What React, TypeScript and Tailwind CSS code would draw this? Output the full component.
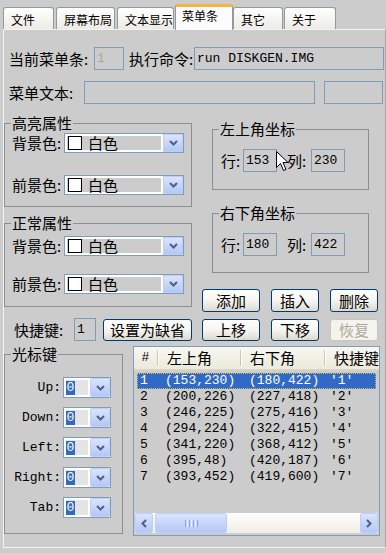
import React from "react";

const MONO = "font-['Liberation_Mono','Noto_Sans_CJK_SC',monospace] text-[13px]";

function Tab({ label, cls }: { label: string; cls: string }) {
  return (
    <div
      className={
        "flex h-[22px] items-center rounded-t-[3px] border border-b-0 border-[#919b9c] bg-gradient-to-b from-white to-[#ecebe5] pl-[7px] pt-[2px] text-[12px] leading-[14px] " +
        cls
      }
    >
      {label}
    </div>
  );
}

function ActiveTab() {
  return (
    <div className="relative z-10 -mb-px ml-[1px] flex h-[26px] w-[58px] items-start rounded-t-[3px] border border-b-0 border-t-[3px] border-[#919b9c] border-t-[#f5b53a] bg-[#fcfcfe] pl-[6px] pt-[2px] text-[12px] leading-[14px]">
      菜单条
    </div>
  );
}

function Field({ cls, value }: { cls: string; value?: string }) {
  return (
    <div className={"flex h-[23px] items-center overflow-hidden border border-[#7f9db9] pl-[2px] " + MONO + " " + cls}>
      {value}
    </div>
  );
}

function Chevron({ dir }: { dir: "down" | "left" | "right" }) {
  if (dir === "down")
    return (
      <svg width="9" height="6" viewBox="0 0 9 6">
        <path d="M1 1 L4.5 4.5 L8 1" fill="none" stroke="#4d6185" strokeWidth="2" />
      </svg>
    );
  if (dir === "left")
    return (
      <svg width="6" height="9" viewBox="0 0 6 9">
        <path d="M5 1 L1.5 4.5 L5 8" fill="none" stroke="#4d6185" strokeWidth="2" />
      </svg>
    );
  return (
    <svg width="6" height="9" viewBox="0 0 6 9">
      <path d="M1 1 L4.5 4.5 L1 8" fill="none" stroke="#4d6185" strokeWidth="2" />
    </svg>
  );
}

function DropBtn() {
  return (
    <div className="flex h-full w-[20px] items-center justify-center rounded-[2px] border border-[#bcd0f8] bg-gradient-to-b from-[#dae4fd] to-[#b4c7f5]">
      <Chevron dir="down" />
    </div>
  );
}

function Group({ legend, cls, children }: { legend: string; cls: string; children: React.ReactNode }) {
  return (
    <fieldset className={"border border-[#8f8f8f] " + cls}>
      <legend className="ml-[6px] px-[1px] text-[15px] leading-[14px]">{legend}</legend>
      {children}
    </fieldset>
  );
}

function ColorRow({ label, cls }: { label: string; cls: string }) {
  return (
    <div className={"flex h-[20px] items-center " + cls}>
      <span className="w-[59px] pl-[7px]">{label}</span>
      <div className="flex h-[20px] w-[120px] border border-[#7f9db9]">
        <div className="flex flex-1 items-center border-2 border-white pl-[1px]">
          <span className="h-[14px] w-[14px] border border-black bg-white" />
          <span className="ml-[6px] leading-[14px]">白色</span>
        </div>
        <DropBtn />
      </div>
    </div>
  );
}

function CoordRow({ a, b, cls }: { a: string; b: string; cls: string }) {
  return (
    <div className={"flex h-[23px] items-center " + cls}>
      <span className="w-[30px] pl-[8px]">行:</span>
      <Field cls="w-[34px]" value={a} />
      <span className="ml-[10px] w-[24px]">列:</span>
      <Field cls="w-[34px]" value={b} />
    </div>
  );
}

function Btn({ children, cls, disabled }: { children: React.ReactNode; cls: string; disabled?: boolean }) {
  return (
    <div
      className={
        (disabled
          ? "border-[#c9c7ba] bg-[#f4f3ee] text-[#aca899] "
          : "border-[#003c74] bg-gradient-to-b from-white via-[#f6f5f1] to-[#dcd9ce] ") +
        "flex items-center justify-center rounded-[3px] border leading-none " +
        cls
      }
    >
      {children}
    </div>
  );
}

function KeyRow({ label }: { label: string }) {
  return (
    <div className="flex h-[21px] items-center">
      <span className={"w-[58px] pr-[2px] text-right " + MONO}>{label}</span>
      <div className="flex h-[21px] w-[48px] border border-[#7f9db9] bg-white">
        <div className="flex flex-1 items-center border-2 border-white bg-[#e4e4e4]">
          <span className={"flex h-[14px] w-[9px] items-center justify-center bg-[#316ac5] text-white " + MONO}>0</span>
        </div>
        <DropBtn />
      </div>
    </div>
  );
}

const rows = [
  ["1", "(153,230)", "(180,422)", "'1'"],
  ["2", "(200,226)", "(227,418)", "'2'"],
  ["3", "(246,225)", "(275,416)", "'3'"],
  ["4", "(294,224)", "(322,415)", "'4'"],
  ["5", "(341,220)", "(368,412)", "'5'"],
  ["6", "(395,48)", "(420,187)", "'6'"],
  ["7", "(393,452)", "(419,600)", "'7'"],
];

function Divider() {
  return (
    <div className="flex h-[16px] w-[2px]">
      <div className="h-full w-px bg-[#c9c6b4]" />
      <div className="h-full w-px bg-white" />
    </div>
  );
}

function ListView() {
  return (
    <div className="ml-[10px] flex h-[190px] w-[247px] flex-col overflow-hidden border border-[#7f9db9] bg-[#cccccc]">
      <div className="flex h-[24px] shrink-0 items-center border-b-2 border-[#d8d4c4] bg-gradient-to-b from-[#f8f7f2] to-[#ebeadb] whitespace-nowrap">
        <div className={"w-[23px] text-center " + MONO}>#</div>
        <Divider />
        <div className="w-[81px] pl-[8px]">左上角</div>
        <Divider />
        <div className="w-[82px] pl-[8px]">右下角</div>
        <Divider />
        <div className="pl-[8px]">快捷键</div>
      </div>
      <div className={"flex-1 px-[3px] pt-[2px] leading-[16px] " + MONO}>
        {rows.map((r, i) => (
          <div
            key={r[0]}
            className={
              "flex h-[16px] items-center whitespace-nowrap " +
              (i === 0 ? "bg-[#316ac5] text-white outline-1 outline-dotted -outline-offset-1 outline-[#c9b86a]" : "")
            }
          >
            <div className="w-[20px] pl-[3px]">{r[0]}</div>
            <div className="w-[83px] pl-[8px]">{r[1]}</div>
            <div className="w-[84px] pl-[9px]">{r[2]}</div>
            <div className="pl-[6px]">{r[3]}</div>
          </div>
        ))}
      </div>
      <div className="mx-px mb-[2px] flex h-[20px] shrink-0 items-stretch bg-gradient-to-b from-[#fefefe] to-[#f0eee5]">
        <div className="flex w-[18px] items-center justify-center rounded-[2px] border border-[#bcd0f8] bg-gradient-to-b from-[#dae4fd] to-[#b4c7f5]">
          <Chevron dir="left" />
        </div>
        <div className="ml-[2px] flex w-[72px] items-center justify-center gap-[1px] rounded-[2px] border border-[#bcd0f8] bg-gradient-to-b from-[#dae4fd] to-[#b4c7f5]">
          <div className="h-[7px] w-px bg-[#8ea6e0]" />
          <div className="h-[7px] w-px bg-[#eef3ff]" />
          <div className="h-[7px] w-px bg-[#8ea6e0]" />
          <div className="h-[7px] w-px bg-[#eef3ff]" />
          <div className="h-[7px] w-px bg-[#8ea6e0]" />
          <div className="h-[7px] w-px bg-[#eef3ff]" />
          <div className="h-[7px] w-px bg-[#8ea6e0]" />
        </div>
        <div className="flex-1" />
        <div className="flex w-[18px] items-center justify-center rounded-[2px] border border-[#bcd0f8] bg-gradient-to-b from-[#dae4fd] to-[#b4c7f5]">
          <Chevron dir="right" />
        </div>
      </div>
    </div>
  );
}

export default function App() {
  return (
    <div className="relative h-[553px] w-[386px] overflow-hidden bg-[#cccccc] font-['Noto_Sans_CJK_SC',sans-serif] text-[15px] leading-[16px] text-black">
      <div className="flex h-[29px] items-end pl-[3px]">
        <Tab cls="w-[51px]" label="文件" />
        <Tab cls="ml-[2px] w-[59px]" label="屏幕布局" />
        <Tab cls="ml-[2px] w-[57px]" label="文本显示" />
        <ActiveTab />
        <Tab cls="w-[50px]" label="其它" />
        <Tab cls="ml-[1px] w-[52px]" label="关于" />
      </div>
      <div className="ml-[3px] h-[519px] w-[383px] border border-[#f4f4f4] border-r-[#a8a8a8]">
        <div className="mt-[17px] flex h-[23px] items-center whitespace-nowrap">
          <span className="ml-[5px] w-[85px]">当前菜单条:</span>
          <Field cls="w-[30px] text-[#aca899]" value="1" />
          <span className="ml-[5px] w-[65px]">执行命令:</span>
          <Field cls="w-[190px] pl-[1px]" value="run DISKGEN.IMG" />
        </div>
        <div className="mt-[11px] flex h-[23px] items-center whitespace-nowrap">
          <span className="ml-[5px] w-[75px]">菜单文本:</span>
          <Field cls="w-[231px]" />
          <Field cls="ml-[9px] w-[59px]" />
        </div>

        <div className="flex items-start whitespace-nowrap">
          <div className="mt-[12px] w-[188px]">
            <Group legend="高亮属性" cls="pb-[11px]">
              <ColorRow label="背景色:" cls="mt-[3px]" />
              <ColorRow label="前景色:" cls="mt-[22px]" />
            </Group>
            <Group legend="正常属性" cls="mt-[9px] pb-[12px]">
              <ColorRow label="背景色:" cls="mt-[6px]" />
              <ColorRow label="前景色:" cls="mt-[18px]" />
            </Group>
          </div>
          <div className="ml-[10px] mt-[18px] w-[177px]">
            <Group legend="左上角坐标" cls="ml-[10px] w-[157px] pb-[17px]">
              <CoordRow a="153" b="230" cls="mt-[13px]" />
            </Group>
            <Group legend="右下角坐标" cls="ml-[10px] mt-[16px] w-[157px] pb-[16px]">
              <CoordRow a="180" b="422" cls="mt-[13px]" />
            </Group>
            <div className="mt-[16px] flex">
              <Btn cls="h-[23px] w-[58px]">添加</Btn>
              <Btn cls="ml-[11px] h-[23px] w-[48px]">插入</Btn>
              <Btn cls="ml-[11px] h-[23px] w-[48px]">删除</Btn>
            </div>
          </div>
        </div>

        <div className="mt-[6px] flex h-[23px] items-center whitespace-nowrap">
          <span className="ml-[10px] w-[60px]">快捷键:</span>
          <Field cls="w-[22px]" value="1" />
          <Btn cls="ml-[7px] h-[22px] w-[89px]">设置为缺省</Btn>
          <Btn cls="ml-[10px] h-[22px] w-[58px]">上移</Btn>
          <Btn cls="ml-[11px] h-[22px] w-[48px]">下移</Btn>
          <Btn disabled cls="ml-[11px] h-[22px] w-[48px]">恢复</Btn>
        </div>

        <div className="mt-[5px] flex items-start whitespace-nowrap">
          <Group legend="光标键" cls="mt-[1px] w-[119px] pb-[15px]">
            <div className="mt-[16px] flex flex-col gap-[9px]">
              <KeyRow label="Up:" />
              <KeyRow label="Down:" />
              <KeyRow label="Left:" />
              <KeyRow label="Right:" />
              <KeyRow label="Tab:" />
            </div>
          </Group>
          <ListView />
        </div>
      </div>
      <svg className="absolute left-[276px] top-[151px]" width="13" height="21" viewBox="0 0 13 21">
        <path d="M0.5 0.5 L0.5 16.5 L4.5 12.5 L7.5 19.5 L10 18.5 L7 11.5 L12 11.5 Z" fill="white" stroke="black" />
      </svg>
    </div>
  );
}
